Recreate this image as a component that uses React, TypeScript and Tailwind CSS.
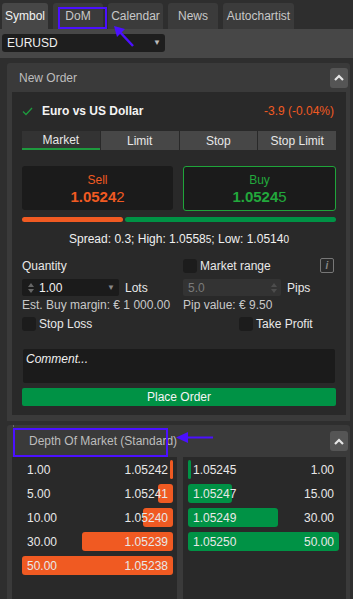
import React from "react"

const tabs = [
  { label: "Symbol", w: "w-[46px]", active: true },
  { label: "DoM", w: "w-[50px]" },
  { label: "Calendar", w: "w-[55px]" },
  { label: "News", w: "w-[50px]" },
  { label: "Autochartist", w: "w-[71px]" },
]

const bids = [
  { qty: "1.00", price: "1.05242", w: 3 },
  { qty: "5.00", price: "1.05241", w: 15 },
  { qty: "10.00", price: "1.05240", w: 30 },
  { qty: "30.00", price: "1.05239", w: 91 },
  { qty: "50.00", price: "1.05238", w: 151 },
]

const asks = [
  { qty: "1.00", price: "1.05245", w: 3 },
  { qty: "15.00", price: "1.05247", w: 44 },
  { qty: "30.00", price: "1.05249", w: 90 },
  { qty: "50.00", price: "1.05250", w: 151 },
]

function Chevron() {
  return (
    <div className="w-[18px] h-[20px] rounded-[3px] bg-[#555555] flex items-center justify-center">
      <svg width="10" height="7" viewBox="0 0 10 7">
        <path d="M1 6 L5 2 L9 6" stroke="#e6e6e6" strokeWidth="2.2" fill="none" />
      </svg>
    </div>
  )
}

function Box() {
  return <div className="w-[14px] h-[14px] rounded-[3px] bg-[#1c1c1c]" />
}

function Spinner({ color }: { color: string }) {
  return (
    <svg width="6" height="12" viewBox="0 0 6 12">
      <path d="M0 5 L3 1 L6 5 Z" fill={color} />
      <path d="M0 7 L3 11 L6 7 Z" fill={color} />
    </svg>
  )
}

export default function App() {
  return (
    <div
      className="relative w-[353px] h-[599px] overflow-hidden bg-[#2e2e2e] text-[12px] leading-[14px] text-[#e8e8e8]"
      style={{ fontFamily: '"Liberation Sans", Arial, sans-serif' }}
    >
      {/* tabs */}
      <div className="flex gap-[5px] pl-[2px] pt-[3px] h-[29px]">
        {tabs.map((t) => (
          <div
            key={t.label}
            className={`${t.w} h-[26px] rounded-t-[3px] flex items-center justify-center ${
              t.active ? "bg-[#474747] text-[#f2f2f2]" : "bg-[#3b3b3b] text-[#c8c8c8]"
            }`}
          >
            {t.label}
          </div>
        ))}
      </div>

      {/* symbol select */}
      <div className="h-[29px] bg-[#474747] px-[2px] pt-[5px]">
        <div className="w-[163px] h-[18px] rounded-[3px] bg-[#1e1e1e] flex items-center justify-between pl-[5px] pr-[4px] text-[#f0f0f0]">
          <span>EURUSD</span>
          <span className="text-[8px] text-[#bbbbbb]">▼</span>
        </div>
      </div>

      {/* New Order panel */}
      <div className="ml-[7px] mr-[3px] mt-[5px] bg-[#3a3a3a] rounded-t-[3px] pb-[6px]">
        <div className="h-[29px] flex items-center justify-between pl-[12px] pr-[2px]">
          <span className="text-[#bdbdbd]">New Order</span>
          <Chevron />
        </div>
        <div className="ml-[5px] mr-[4px] bg-[#292929] px-[10px] pt-[12px] pb-[9px]">
          <div className="flex items-center h-[14px]">
            <svg width="11" height="9" viewBox="0 0 11 9">
              <path d="M1 4.5 L4 7.5 L10 1" stroke="#1e9a3e" strokeWidth="1.3" fill="none" />
            </svg>
            <span className="ml-[9px] font-bold text-[#f4f4f4]">Euro vs US Dollar</span>
            <span className="ml-auto mr-[2px] text-[#f05a22]">-3.9 (-0.04%)</span>
          </div>

          <div className="mt-[13px] grid grid-cols-4 gap-[1px] h-[19px]">
            <div className="bg-[#333333] border-b-2 border-[#1e9a3e] flex items-center justify-center">Market</div>
            <div className="bg-[#474747] flex items-center justify-center">Limit</div>
            <div className="bg-[#474747] flex items-center justify-center">Stop</div>
            <div className="bg-[#474747] flex items-center justify-center">Stop Limit</div>
          </div>

          <div className="mt-[16px] flex gap-[10px]">
            <div className="flex-1 h-[44px] rounded-[3px] bg-[#1b1b1b] flex flex-col items-center justify-center pt-[2px] text-[#f05a22]">
              <span className="leading-[15px]">Sell</span>
              <span className="leading-[18px] text-[15px]">
                <b>1.0524</b>2
              </span>
            </div>
            <div className="flex-1 h-[45px] rounded-[3px] bg-[#1b1b1b] border border-[#1fa53a] flex flex-col items-center justify-center pt-[2px] text-[#22a83c]">
              <span className="leading-[15px]">Buy</span>
              <span className="leading-[18px] text-[15px]">
                <b>1.0524</b>5
              </span>
            </div>
          </div>

          <div className="mt-[6px] flex gap-[2px] h-[5px]">
            <div className="w-[101px] rounded-full bg-[#f05a22]" />
            <div className="flex-1 rounded-full bg-[#009245]" />
          </div>

          <div className="mt-[10px] text-center text-[#f0f0f0]">
            Spread: 0.3; High: 1.0558<span className="text-[10px]">5</span>; Low: 1.0514
            <span className="text-[10px]">0</span>
          </div>

          <div className="mt-[11px] grid grid-cols-2 gap-x-[8px]">
            <div>
              <div className="h-[15px] flex items-center">Quantity</div>
              <div className="mt-[6px] flex items-center">
                <div className="w-[97px] h-[17px] rounded-[2px] bg-[#1b1b1b] flex items-center pl-[6px] pr-[4px]">
                  <Spinner color="#666666" />
                  <span className="ml-[5px] text-[#f0f0f0]">1.00</span>
                  <span className="ml-auto text-[8px] text-[#888888]">▼</span>
                </div>
                <span className="ml-[6px]">Lots</span>
              </div>
              <div className="mt-[2px] text-[#c8c8c8]">Est. Buy margin: € 1 000.00</div>
              <div className="mt-[5px] flex items-center">
                <Box />
                <span className="ml-[3px]">Stop Loss</span>
              </div>
            </div>
            <div>
              <div className="h-[15px] flex items-center">
                <Box />
                <span className="ml-[3px]">Market range</span>
                <div className="ml-auto mr-[2px] w-[14px] h-[15px] rounded-[2px] border border-[#777777] flex items-center justify-center text-[10px] italic font-bold text-[#888888]">
                  i
                </div>
              </div>
              <div className="mt-[6px] flex items-center">
                <div className="w-[98px] h-[17px] rounded-[2px] bg-[#333333] flex items-center pl-[5px] pr-[4px]">
                  <span className="text-[#7a7a7a]">5.0</span>
                  <span className="ml-auto">
                    <Spinner color="#4d4d4d" />
                  </span>
                </div>
                <span className="ml-[6px]">Pips</span>
              </div>
              <div className="mt-[2px] text-[#c8c8c8]">Pip value: € 9.50</div>
              <div className="mt-[5px] flex items-center pl-[56px]">
                <Box />
                <span className="ml-[3px]">Take Profit</span>
              </div>
            </div>
          </div>

          <div className="mt-[18px] mx-[1px] h-[34px] rounded-[2px] bg-[#1b1b1b] px-[3px] pt-[3px] italic text-[#f0f0f0]">
            Comment...
          </div>
          <div className="mt-[5px] h-[18px] rounded-[2px] bg-[#009245] flex items-center justify-center text-[#f4f4f4]">
            Place Order
          </div>
        </div>
      </div>

      {/* DoM panel */}
      <div className="ml-[7px] mr-[3px] mt-[4px] h-[200px] bg-[#3a3a3a] rounded-t-[3px]">
        <div className="h-[32px] flex items-center justify-between pl-[15px] pr-[2px] border-l border-dotted border-[#6a6a6a] ml-[6px]">
          <span className="text-[#bdbdbd]">Depth Of Market (Standard)</span>
          <Chevron />
        </div>
        <div className="ml-[5px] mr-[4px] flex gap-[6px] h-[170px]">
          <div className="w-[165px] bg-[#292929] pl-[10px] pr-[4px] pt-[3px] flex flex-col gap-[5px]">
            {bids.map((r) => (
              <div key={r.price} className="relative h-[19px] flex items-center pl-[5px] pr-[5px]">
                <div
                  className="absolute right-0 top-0 h-[19px] rounded-[3px] bg-[#f05a22]"
                  style={{ width: r.w }}
                />
                <span className="relative">{r.qty}</span>
                <span className="relative ml-auto">{r.price}</span>
              </div>
            ))}
          </div>
          <div className="flex-1 bg-[#292929] pl-[5px] pr-[7px] pt-[3px] flex flex-col gap-[5px]">
            {asks.map((r) => (
              <div key={r.price} className="relative h-[19px] flex items-center pl-[5px] pr-[5px]">
                <div
                  className="absolute left-0 top-0 h-[19px] rounded-[3px] bg-[#009245]"
                  style={{ width: r.w }}
                />
                <span className="relative">{r.price}</span>
                <span className="relative ml-auto">{r.qty}</span>
              </div>
            ))}
          </div>
        </div>
      </div>

      {/* annotations */}
      <svg className="absolute left-0 top-0 pointer-events-none" width="353" height="599">
        <rect x="59" y="8" width="47" height="20" stroke="#4b10ff" strokeWidth="2" fill="none" />
        <path d="M133 46 L118 30" stroke="#4b10ff" strokeWidth="2.5" />
        <path d="M114 26 L125 29 L117 37 Z" fill="#4b10ff" />
        <rect x="14" y="429" width="153" height="27" stroke="#4b10ff" strokeWidth="2" fill="none" />
        <path d="M213 437.5 L182 437.5" stroke="#4b10ff" strokeWidth="2" />
        <path d="M176 437.5 L188 432 L188 443 Z" fill="#4b10ff" />
      </svg>
    </div>
  )
}
